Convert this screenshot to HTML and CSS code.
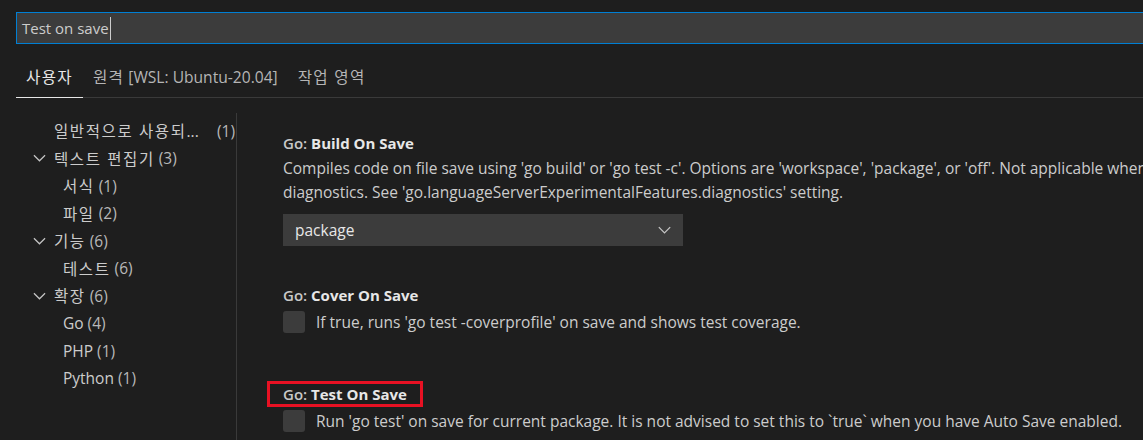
FILE: index.html
```html
<!DOCTYPE html>
<html lang="ko">
<head>
<meta charset="utf-8">
<link rel="stylesheet" href="styles.css">
</head>
<body>
<div class="page">
  <div class="search"><span class="search-text">Test on save</span><span class="caret"></span></div>
  <div class="tabs">
    <div class="tab active"><span class="ko">사용자</span></div>
    <div class="tab"><span class="ko">원격</span> [WSL: Ubuntu-20.04]</div>
    <div class="tab"><span class="ko">작업 영역</span></div>
  </div>
  <div class="body">
    <div class="tree">
      <div class="row l1"><span class="chev-space"></span><span class="label ko">일반적으로 사용되</span><span class="label">...</span><span class="count right">(1)</span></div>
      <div class="row l1"><svg class="chev" viewBox="0 0 14 8"><path d="M1 1 L7 7 L13 1" /></svg><span class="label ko">텍스트 편집기</span><span class="count">(3)</span></div>
      <div class="row l2"><span class="label ko">서식</span><span class="count">(1)</span></div>
      <div class="row l2"><span class="label ko">파일</span><span class="count">(2)</span></div>
      <div class="row l1"><svg class="chev" viewBox="0 0 14 8"><path d="M1 1 L7 7 L13 1" /></svg><span class="label ko">기능</span><span class="count">(6)</span></div>
      <div class="row l2"><span class="label ko">테스트</span><span class="count">(6)</span></div>
      <div class="row l1"><svg class="chev" viewBox="0 0 14 8"><path d="M1 1 L7 7 L13 1" /></svg><span class="label ko">확장</span><span class="count">(6)</span></div>
      <div class="row l2"><span class="label">Go</span><span class="count">(4)</span></div>
      <div class="row l2"><span class="label">PHP</span><span class="count">(1)</span></div>
      <div class="row l2"><span class="label">Python</span><span class="count">(1)</span></div>
    </div>
    <div class="divider"></div>
    <div class="settings">
      <div class="setting s1">
        <div class="title"><span class="cat">Go: </span><span class="name">Build On Save</span></div>
        <div class="desc">Compiles code on file save using 'go build' or 'go test -c'. Options are 'workspace', 'package', or 'off'. Not applicable when using the language server's<br>diagnostics. See 'go.languageServerExperimentalFeatures.diagnostics' setting.</div>
        <div class="select"><span>package</span><svg class="sel-chev" viewBox="0 0 16 9"><path d="M1 1 L8 8 L15 1" /></svg></div>
      </div>
      <div class="setting s2">
        <div class="title"><span class="cat">Go: </span><span class="name">Cover On Save</span></div>
        <div class="check-row"><span class="checkbox"></span><span class="desc">If true, runs 'go test -coverprofile' on save and shows test coverage.</span></div>
      </div>
      <div class="setting s3">
        <div class="title"><span class="highlight"><span class="cat">Go: </span><span class="name">Test On Save</span></span></div>
        <div class="check-row"><span class="checkbox"></span><span class="desc">Run 'go test' on save for current package. It is not advised to set this to `true` when you have Auto Save enabled.</span></div>
      </div>
    </div>
  </div>
</div>
</body>
</html>
```
FILE: styles.css
```css
html, body {
  margin: 0;
  padding: 0;
  background: #1e1e1e;
  overflow: hidden;
}
body {
  width: 1143px;
  height: 440px;
  font-family: "Open Sans", "Noto Sans CJK KR", sans-serif;
  color: #cccccc;
}
.page {
  padding: 12px 0 0 16px;
}
.search {
  height: 30px;
  border: 1px solid #007fd4;
  border-right: none;
  background: #3c3c3c;
  display: flex;
  align-items: center;
  padding-left: 5px;
  font-size: 15px;
  color: #cccccc;
}
.caret {
  display: inline-block;
  width: 1px;
  height: 23px;
  background: #cccccc;
  margin-left: 1px;
}
.tabs {
  display: flex;
  margin-top: 20px;
  border-bottom: 1px solid #3a3a3a;
  height: 33px;
  font-size: 15.6px;
}
.tab {
  padding: 0 10px 0 10px;
  line-height: 26px;
  color: #b5b5b5;
}
.tab .ko { letter-spacing: 1.3px; }
.tab.active {
  color: #e7e7e7;
  border-bottom: 1px solid #e7e7e7;
  margin-bottom: -1px;
}
.body {
  display: flex;
  margin-top: 19px;
}
.tree {
  width: 220px;
  font-size: 15.5px;
  padding-top: 0;
}
.row {
  display: flex;
  align-items: center;
  height: 27.5px;
  white-space: nowrap;
}
.row.l1 { padding-left: 17px; }
.row.l2 { padding-left: 47px; }
.chev, .chev-space {
  width: 13px;
  height: 8px;
  margin-right: 8px;
  flex: none;
}
.chev path {
  fill: none;
  stroke: #c5c5c5;
  stroke-width: 1.3;
}
.label { color: #cccccc; }
.label.ko { letter-spacing: 1.6px; white-space: pre; }
.count { color: #b8b8b8; margin-left: 4px; }
.count.right { margin-left: auto; padding-right: 1px; }
.divider {
  width: 1px;
  background: #3a3a3a;
  height: 330px;
  flex: none;
  margin-top: -4px;
}
.settings {
  flex: 1;
  padding-left: 46px;
  min-width: 0;
  overflow: hidden;
  white-space: nowrap;
}
.s1 { padding-top: 13px; }
.s2 { padding-top: 36px; }
.s3 { padding-top: 47px; }
.title {
  font-size: 15px;
  line-height: 26px;
  color: #e7e7e7;
}
.cat { color: #c8c8c8; font-weight: 600; }
.name { font-weight: 700; }
.desc {
  font-size: 15.5px;
  line-height: 24px;
  color: #cccccc;
  white-space: nowrap;
}
.select {
  box-sizing: border-box;
  width: 400px;
  height: 32px;
  margin-top: 10px;
  background: #3c3c3c;
  display: flex;
  align-items: center;
  justify-content: space-between;
  padding: 0 12px;
  font-size: 15.5px;
  color: #e7e7e7;
}
.sel-chev {
  width: 13px;
  height: 8px;
}
.sel-chev path {
  fill: none;
  stroke: #c5c5c5;
  stroke-width: 1.6;
}
.check-row {
  display: flex;
  align-items: center;
  gap: 11px;
  margin-top: 2px;
}
.checkbox {
  width: 22px;
  height: 22px;
  background: #3c3c3c;
  border-radius: 3px;
  flex: none;
}
.highlight {
  display: inline-block;
  border: 3px solid #e81123;
  margin-left: -16px;
  padding: 0 13px 0 13px;
  line-height: 20px;
}
```
